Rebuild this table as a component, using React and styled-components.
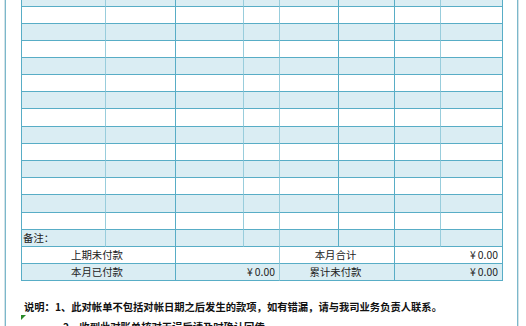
import React from 'react';
import styled, { createGlobalStyle } from 'styled-components';

const line = '#58adc6';
const lightLine = '#98cddc';
const shade = '#daedf3';

const GlobalStyle = createGlobalStyle`
    html, body {
        margin: 0;
        padding: 0;
        background: #ffffff;
        overflow: hidden;
    }
    body {
        font-family: "Noto Sans CJK SC", "Noto Sans", sans-serif;
        color: #222222;
    }
`

const Page = styled.div`
    width: 526px;
    height: 326px;
    overflow: hidden;
`

const Frame = styled.div`
    margin-left: 4px;
    width: 515px;
    height: 100%;
    box-sizing: border-box;
    border-left: 1px solid #d3e2e7;
    border-right: 1px solid #d3e2e7;
`

const Inner = styled.div`
    height: 100%;
    box-sizing: border-box;
    border-left: 1px solid #7bb8cb;
    border-right: 1px solid #7bb8cb;
`

const Sheet = styled.div`
    display: grid;
    grid-template-columns: 84px 70px 68px 36px 59px 56px 46px 62px;
    width: 482px;
    margin-left: 15px;
    box-sizing: border-box;
    border-left: 1px solid ${line};
`

const Cell = styled.div`
    box-sizing: border-box;
    height: ${props => props.$h}px;
    grid-column: span ${props => props.$span || 1};
    background: ${props => props.$shade ? shade : '#ffffff'};
    border-right: 1px solid ${props => props.$light ? lightLine : line};
    border-bottom: 1px solid ${line};
    font-size: 10.4px;
    line-height: ${props => props.$h - 1}px;
    white-space: nowrap;
    overflow: hidden;
    padding: 0 4px 0 1px;
    text-align: ${props => props.$align || 'left'};
`

const Notes = styled.div`
    margin-top: 16px;
    font-size: 10.3px;
    font-weight: 700;
    line-height: 20px;
    color: #111111;
`

const NoteLine = styled.div`
    position: relative;
    white-space: nowrap;
    padding-left: ${props => props.$indent}px;
`

// little green corner mark excel draws on a cell
const CornerMark = styled.span`
    position: absolute;
    left: 15px;
    top: -2px;
    width: 0;
    height: 0;
    border-top: 5px solid #2a8a2a;
    border-right: 5px solid transparent;
`

const lightCols = [true, false, true, true, false, false, true, false];
const rowHeights = [7, 17, 17, 17, 17, 17, 17, 18, 17, 17, 17, 17, 18, 17, 17];

const SummaryRow = ({ label1, value1, label2, value2, shaded }) => (
    <>
        <Cell $h={17} $span={2} $shade={shaded} $align="center">{label1}</Cell>
        <Cell $h={17} $span={2} $shade={shaded} $light $align="right">{value1}</Cell>
        <Cell $h={17} $span={2} $shade={shaded} $align="center">{label2}</Cell>
        <Cell $h={17} $span={2} $shade={shaded} $align="right">{value2}</Cell>
    </>
);

export default function App() {
    return (
        <Page>
            <GlobalStyle />
            <Frame>
                <Inner>
                    <Sheet>
                        {rowHeights.map((h, r) =>
                            lightCols.map((light, c) => (
                                <Cell key={r + '-' + c} $h={h} $shade={r % 2 === 0} $light={light}>
                                    {r === 14 && c === 0 ? '备注：' : ''}
                                </Cell>
                            ))
                        )}
                        <SummaryRow label1="上期未付款" value1="" label2="本月合计" value2={'¥\u20090.00'} />
                        <SummaryRow label1="本月已付款" value1={'¥\u20090.00'} label2="累计未付款" value2={'¥\u20090.00'} shaded />
                    </Sheet>
                    <Notes>
                        <NoteLine $indent={18}>说明：1、此对帐单不包括对帐日期之后发生的款项，如有错漏，请与我司业务负责人联系。</NoteLine>
                        <NoteLine $indent={57}>
                            <CornerMark />
                            2、收到此对账单核对无误后请及时确认回传。
                        </NoteLine>
                    </Notes>
                </Inner>
            </Frame>
        </Page>
    );
}
